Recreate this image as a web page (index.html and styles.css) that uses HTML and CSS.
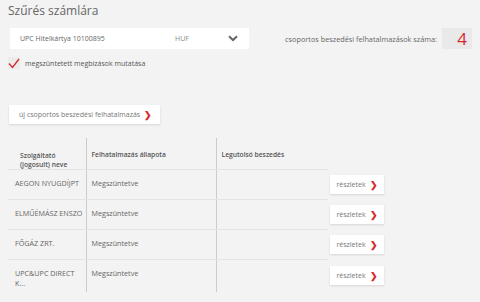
FILE: index.html
```html
<!DOCTYPE html>
<html lang="hu">
<head>
    <meta charset="UTF-8">
    <meta name="viewport" content="width=device-width, initial-scale=1.0">
    <title>Csoportos beszedési felhatalmazások</title>
    <link rel="stylesheet" href="styles.css">
</head>
<body>
    <div class="page">
        <h1 class="title">Szűrés számlára</h1>

        <div class="filter-row">
            <div class="account-select">
                <span class="account-name">UPC Hitelkártya 10100895</span>
                <span class="account-currency">HUF</span>
                <svg class="chevron-down" width="10" height="7" viewBox="0 0 10 7">
                    <path d="M1 1.2 L5 5 L9 1.2" fill="none" stroke="#666" stroke-width="2"/>
                </svg>
            </div>
            <div class="counter">
                <span class="counter-label">csoportos beszedési felhatalmazások száma:</span>
                <span class="counter-value">4</span>
            </div>
        </div>

        <label class="check">
            <span class="check-box">
                <svg width="12" height="11" viewBox="0 0 12 11">
                    <path d="M1 5.5 L4.5 9.5 L11 1" fill="none" stroke="#d52b2f" stroke-width="1.4"/>
                </svg>
            </span>
            megszüntetett megbízások mutatása
        </label>

        <button class="btn new-btn">új csoportos beszedési felhatalmazás <span class="arrow">&#10095;</span></button>

        <table class="mandates">
            <thead>
                <tr>
                    <th class="col-name">Szolgáltató<br>(jogosult) neve</th>
                    <th class="col-state">Felhatalmazás állapota</th>
                    <th class="col-last">Legutolsó beszedés</th>
                    <th class="col-action"></th>
                </tr>
            </thead>
            <tbody>
                <tr>
                    <td class="col-name">AEGON NYUGDÍJPT</td>
                    <td class="col-state">Megszüntetve</td>
                    <td class="col-last"></td>
                    <td class="col-action"><button class="btn detail-btn">részletek <span class="arrow">&#10095;</span></button></td>
                </tr>
                <tr>
                    <td class="col-name">ELMŰÉMÁSZ ENSZO</td>
                    <td class="col-state">Megszüntetve</td>
                    <td class="col-last"></td>
                    <td class="col-action"><button class="btn detail-btn">részletek <span class="arrow">&#10095;</span></button></td>
                </tr>
                <tr>
                    <td class="col-name">FŐGÁZ ZRT.</td>
                    <td class="col-state">Megszüntetve</td>
                    <td class="col-last"></td>
                    <td class="col-action"><button class="btn detail-btn">részletek <span class="arrow">&#10095;</span></button></td>
                </tr>
                <tr class="last-row">
                    <td class="col-name">UPC&amp;UPC DIRECT<br>K...</td>
                    <td class="col-state">Megszüntetve</td>
                    <td class="col-last"></td>
                    <td class="col-action"><button class="btn detail-btn">részletek <span class="arrow">&#10095;</span></button></td>
                </tr>
            </tbody>
        </table>
    </div>
</body>
</html>
```

FILE: styles.css
```css
body {
    font-family: "Open Sans", Arial, sans-serif;
    background-color: #f3f3f3;
    color: #555;
    margin: 0;
    padding: 0;
}

.page {
    padding: 3px 8px 0 8px;
}

.title {
    font-size: 12px;
    font-weight: normal;
    color: #666;
    margin: 0 0 9px 0;
    line-height: 16px;
}

.filter-row {
    display: flex;
    align-items: center;
    padding-left: 2px;
}

.account-select {
    width: 239px;
    height: 21px;
    background-color: #fff;
    display: flex;
    align-items: center;
    font-size: 7px;
    color: #666;
    box-sizing: border-box;
    padding: 0 11px 0 10px;
}

.account-name {
    width: 155px;
}

.account-currency {
    flex: 1;
    color: #888;
}

.chevron-down {
    display: block;
}

.counter {
    display: flex;
    align-items: center;
    margin-left: auto;
}

.counter-label {
    font-size: 7.3px;
    color: #666;
    margin-right: 5px;
}

.counter-value {
    width: 30px;
    height: 21px;
    background-color: #e9e9e9;
    color: #d52b2f;
    font-size: 17px;
    line-height: 21px;
    text-align: right;
    padding-right: 5px;
    box-sizing: border-box;
}

.check {
    display: flex;
    align-items: center;
    font-size: 7px;
    color: #555;
    margin-top: 8px;
}

.check-box {
    width: 12px;
    height: 12px;
    background-color: #ececec;
    margin-right: 5px;
    display: flex;
    align-items: center;
    justify-content: center;
}

.btn {
    font-family: inherit;
    background-color: #fff;
    border: none;
    box-shadow: 0 1px 2px rgba(0, 0, 0, 0.12);
    color: #777;
    font-size: 7px;
    cursor: pointer;
    display: inline-flex;
    align-items: center;
    justify-content: center;
}

.arrow {
    color: #d52b2f;
    font-size: 9px;
    font-weight: bold;
    margin-left: 4px;
}

.new-btn {
    margin-top: 36px;
    margin-left: 1px;
    height: 19px;
    padding: 0 8px 0 10px;
}

.mandates {
    border-collapse: collapse;
    margin-top: 14px;
    font-size: 7.2px;
    color: #666;
    table-layout: fixed;
}

.mandates th,
.mandates td {
    box-sizing: border-box;
    padding: 0;
    text-align: left;
}

.mandates th {
    font-weight: 600;
    font-size: 6.7px;
    color: #555;
    height: 30px;
    line-height: 9px;
    vertical-align: top;
    padding-top: 12px;
}

.mandates td {
    height: 30px;
    line-height: 10px;
    vertical-align: top;
    padding-top: 8px;
}

.col-name {
    width: 78px;
    padding-left: 7px !important;
}

.mandates th.col-name {
    padding-top: 13px;
    padding-left: 12px !important;
}

.col-state {
    width: 130px;
    border-left: 1px solid #cbcbcb;
    padding-left: 5px !important;
}

.col-last {
    width: 112px;
    border-left: 1px solid #cbcbcb;
    padding-left: 5px !important;
}

.mandates .col-name,
.mandates .col-state,
.mandates .col-last {
    border-bottom: 1px solid #e4e4e4;
}

.mandates td.col-action {
    width: 60px;
    padding: 0 0 0 2px;
    vertical-align: middle;
}

.detail-btn {
    width: 54px;
    height: 19px;
}

.mandates .last-row td {
    border-bottom: none;
    height: 32px;
}
```
